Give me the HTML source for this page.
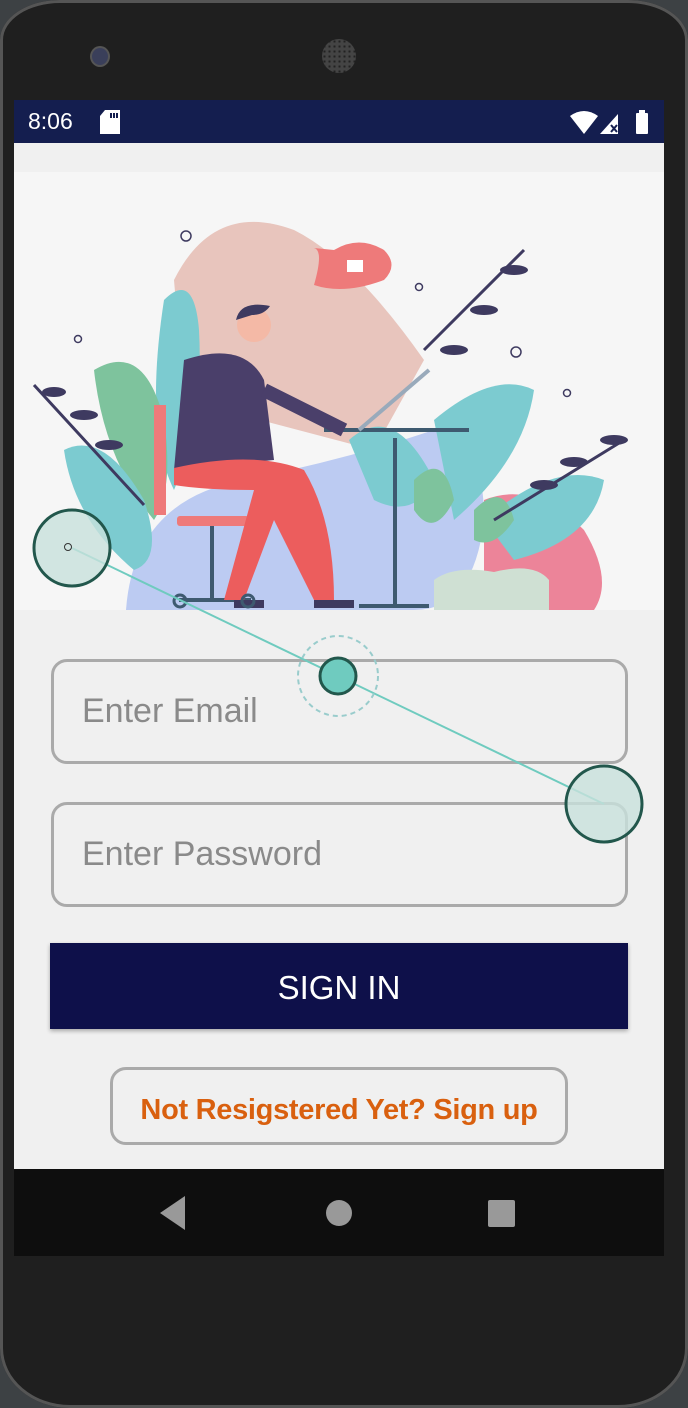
<!DOCTYPE html>
<html><head><meta charset="utf-8"><style>
body{margin:0;width:688px;height:1408px;background:#3d4144;overflow:hidden;font-family:"Liberation Sans",Roboto,sans-serif;position:relative}
.phone{position:absolute;left:0;top:0;width:688px;height:1408px;background:#1f1f1f;border-radius:60px 60px 70px 70px/40px 40px 60px 60px;box-shadow:inset 0 0 0 3px #555}
.screen{position:absolute;left:14px;top:100px;width:650px;height:1156px;background:#f0f0f0;overflow:hidden}
.status{position:absolute;left:0;top:0;width:650px;height:43px;background:#141e4f;color:#fff;font-size:23px}
.field{position:absolute;left:37px;width:577px;height:105px;border:3px solid #aaa;border-radius:16px;box-sizing:border-box;font-size:34px;color:#8a8a8a;padding-left:28px;line-height:99px}
.btn{position:absolute;left:36px;top:843px;width:578px;height:86px;background:#0e104a;color:#fff;font-size:33px;text-align:center;line-height:90px;box-shadow:0 2px 4px rgba(0,0,0,.3)}
.reg{position:absolute;left:96px;top:967px;width:458px;height:78px;border:3px solid #aaa;border-radius:16px;box-sizing:border-box;color:#d9600f;font-weight:bold;font-size:29px;text-align:center;line-height:80px;letter-spacing:-0.3px}
.nav{position:absolute;left:0;top:1069px;width:650px;height:87px;background:#0e0e0e}
</style></head><body>
<div class="phone"></div>
<div style="position:absolute;left:92px;top:48px;width:16px;height:17px;border-radius:50%;background:#3a3f5a;box-shadow:0 0 0 2px #555"></div>
<div style="position:absolute;left:322px;top:39px;width:34px;height:34px;border-radius:50%;background:#444;background-image:radial-gradient(#222 30%,transparent 35%);background-size:5px 5px"></div>
<div class="screen">
 <div class="status"><span style="position:absolute;left:14px;top:8px">8:06</span>
  <svg style="position:absolute;left:86px;top:10px" width="20" height="24"><path d="M5 0H20V24H0V6Z" fill="#fff"/><rect x="10" y="3" width="2" height="5" fill="#141e4f"/><rect x="13" y="3" width="2" height="5" fill="#141e4f"/><rect x="16" y="3" width="2" height="5" fill="#141e4f"/></svg>
  <svg style="position:absolute;left:556px;top:10px" width="90" height="24"><path d="M0 6Q14-4 28 6L14 24Z" fill="#fff"/><path d="M30 24L48 4V24Z" fill="#fff"/><path d="M41 15l6 7M47 15l-6 7" stroke="#141e4f" stroke-width="2"/><rect x="66" y="3" width="12" height="21" rx="1" fill="#fff"/><rect x="69" y="0" width="6" height="4" fill="#fff"/></svg>
 </div>
 <div style="position:absolute;left:0;top:72px;width:650px;height:438px;background:#f6f6f6"></div>
 <svg style="position:absolute;left:0;top:72px" width="650" height="438" viewBox="0 72 650 438">
  <path d="M160 180Q200 100 280 130Q340 160 410 260L360 350L170 300Z" fill="#e8c5bd"/>
  <path d="M112 510Q120 400 230 380Q330 360 420 330Q470 330 470 420Q460 510 400 510Z" fill="#bccbf2"/>
  <path d="M470 400Q520 380 570 430Q600 480 580 510H470Z" fill="#ec8499"/>
  <path d="M150 200Q180 170 185 230Q190 320 160 390Q130 330 150 200Z" fill="#7ccbd0"/>
  <path d="M80 270Q130 240 150 320Q160 390 140 420Q90 360 80 270Z" fill="#7ec39d"/>
  <path d="M50 350Q90 330 130 400Q150 460 120 470Q60 420 50 350Z" fill="#7ccbd0"/>
  <path d="M335 340Q380 300 420 380Q400 420 360 400Z" fill="#7ccbd0"/>
  <path d="M420 320Q480 270 520 290Q510 360 440 420Z" fill="#7ccbd0"/>
  <path d="M470 420Q540 360 590 380Q580 440 500 460Z" fill="#7ccbd0"/>
  <path d="M400 380Q430 350 440 400Q420 440 400 410Z" fill="#7ec39d"/>
  <path d="M460 410Q490 380 500 420Q480 450 460 440Z" fill="#7ec39d"/>
  <path d="M420 480Q440 465 480 472Q520 462 535 480V510H420Z" fill="#cfe0d3"/>
  <path d="M20 285l110 120M410 250l100-100M480 420l130-80" stroke="#3e3a60" stroke-width="3" fill="none"/>
  <g fill="#3e3a60"><ellipse cx="40" cy="292" rx="12" ry="5"/><ellipse cx="70" cy="315" rx="14" ry="5"/><ellipse cx="95" cy="345" rx="14" ry="5"/><ellipse cx="500" cy="170" rx="14" ry="5"/><ellipse cx="470" cy="210" rx="14" ry="5"/><ellipse cx="440" cy="250" rx="14" ry="5"/><ellipse cx="560" cy="362" rx="14" ry="5"/><ellipse cx="600" cy="340" rx="14" ry="5"/><ellipse cx="530" cy="385" rx="14" ry="5"/></g>
  <path d="M300 148Q310 150 300 185Q330 195 370 180Q385 165 370 150Q345 135 320 150Z" fill="#ee7a7a"/>
  <rect x="333" y="160" width="16" height="12" fill="#fff"/>
  <path d="M310 330h145M381 338v170M345 506h70" stroke="#3e5a70" stroke-width="4"/>
  <path d="M345 330l70-60" stroke="#9ab" stroke-width="4"/>
  <rect x="140" y="305" width="12" height="110" fill="#ee7a7a"/>
  <rect x="163" y="416" width="72" height="10" rx="3" fill="#ee7a7a"/>
  <path d="M198 426v75M165 500h72" stroke="#3e5a70" stroke-width="4"/>
  <path d="M170 260Q230 240 250 280L260 360L160 370Z" fill="#4a3f6a"/>
  <path d="M160 368Q240 350 290 370Q320 420 320 500H300L260 420L230 500H210L240 390Q190 390 160 385Z" fill="#ec5d5d"/>
  <path d="M250 290l80 40" stroke="#4a3f6a" stroke-width="14"/>
  <circle cx="240" cy="225" r="17" fill="#f4b9a6"/><path d="M222 220Q226 200 256 206Q250 215 238 215Z" fill="#3e3a60"/>
  <path d="M300 500h40v8h-40ZM220 500h30v8h-30Z" fill="#3e3a60"/>
  <g fill="none" stroke="#3e3a60" stroke-width="1.5"><circle cx="172" cy="136" r="5"/><circle cx="64" cy="239" r="3.5"/><circle cx="405" cy="187" r="3.5"/><circle cx="502" cy="252" r="5"/><circle cx="553" cy="293" r="3.5"/><circle cx="166" cy="501" r="6" stroke-width="3" stroke="#3e5a70"/><circle cx="234" cy="501" r="6" stroke-width="3" stroke="#3e5a70"/></g>
 </svg>
 <div class="field" style="top:559px">Enter Email</div>
 <div class="field" style="top:702px">Enter Password</div>
 <div class="btn">SIGN IN</div>
 <div class="reg">Not Resigstered Yet? Sign up</div>
 <div class="nav">
  <svg width="650" height="87"><path d="M174 27L149 44L174 61Z" fill="#999" transform="translate(-3,0)"/><ellipse cx="325" cy="44" rx="13" ry="13" fill="#999"/><rect x="474" y="31" width="27" height="27" rx="2" fill="#999"/></svg>
 </div>
</div>
<svg style="position:absolute;left:0;top:0" width="688" height="1408">
 <path d="M72 548L338 676L604 804" stroke="#6fcbbf" stroke-width="2"/>
 <circle cx="72" cy="548" r="38" fill="rgba(200,225,220,.8)" stroke="#22574c" stroke-width="3"/><circle cx="68" cy="547" r="3.5" fill="none" stroke="#333"/>
 <circle cx="338" cy="676" r="40" fill="none" stroke="#9cc" stroke-dasharray="5 4" stroke-width="2"/>
 <circle cx="338" cy="676" r="18" fill="#6fcbbf" stroke="#22574c" stroke-width="3"/>
 <circle cx="604" cy="804" r="38" fill="rgba(200,225,220,.8)" stroke="#22574c" stroke-width="3"/>
</svg>
</body></html>
